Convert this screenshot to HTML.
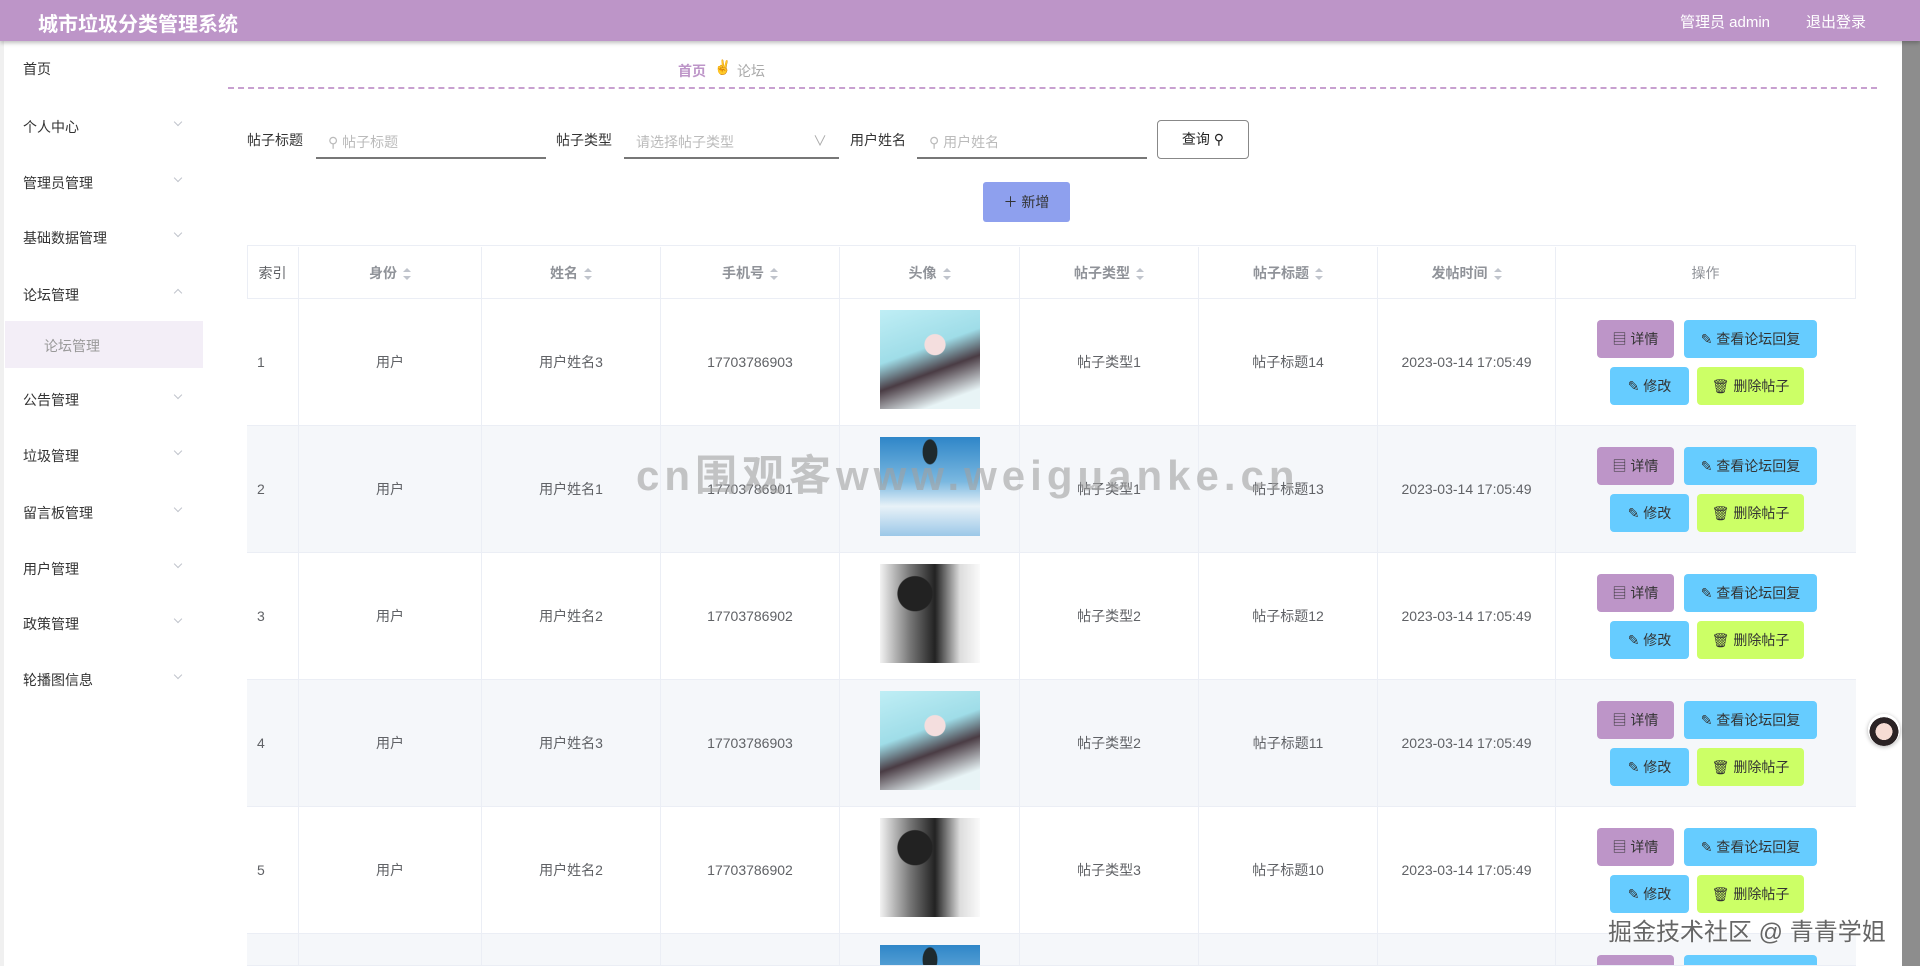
<!DOCTYPE html>
<html><head><meta charset="utf-8"><style>
*{box-sizing:border-box;margin:0;padding:0}
html,body{width:1920px;height:966px;overflow:hidden}
body{background:#fff;font-family:"Liberation Sans","Noto Sans CJK SC",sans-serif;color:#333;position:relative}
#wrap{position:absolute;left:0;top:0;width:1920px;height:966px;overflow:hidden}
.a{position:absolute}
.hdr{left:0;top:0;width:1920px;height:41px;background:#bd95c8;box-shadow:0 2px 4px rgba(0,0,0,.25);z-index:3}
.sb{left:1902px;top:41px;width:18px;height:925px;background:#8d8d8d}
.nav{left:23px;font-size:14px;color:#333}
.chev{left:175px;width:6px;height:6px;border-right:1px solid #c0c4cc;border-bottom:1px solid #c0c4cc;transform:rotate(45deg)}
.chev.up{transform:rotate(225deg)}
.lbl{font-size:14px;color:#333;top:130px}
.inp{border-bottom:2px solid #777;height:30px;top:129px;font-size:14px;color:#bbb;padding:3px 0 0 12px}
.th{top:247px;height:52px;border-right:1px solid #ebeef5;font-size:14px;color:#909399;font-weight:bold;text-align:center;line-height:52px}
.sort{display:inline-block;vertical-align:middle;margin-left:6px;width:8px;height:12px;position:relative}
.sort:before{content:"";position:absolute;left:0;top:0;border:4px solid transparent;border-bottom-color:#c0c4cc;border-top:0}
.sort:after{content:"";position:absolute;left:0;bottom:0;border:4px solid transparent;border-top-color:#c0c4cc;border-bottom:0}
.row{left:0;width:1609px;height:127px;border-bottom:1px solid #ebeef5}
.cell{position:absolute;top:0;height:127px;line-height:127px;font-size:14px;color:#606266;text-align:center;border-right:1px solid #ebeef5}
.btn{position:absolute;height:38px;border-radius:4px;font-size:14px;color:#333;line-height:38px;text-align:center}
.pic{position:absolute;left:633px;top:11px;width:100px;height:99px}
</style></head><body><div id="wrap">
<div class="a hdr"><div class="a" style="left:38px;top:8px;font-size:20px;font-weight:bold;color:#fff">城市垃圾分类管理系统</div>
<div class="a" style="left:1680px;top:11px;font-size:15px;color:#fff">管理员 admin</div>
<div class="a" style="left:1806px;top:11px;font-size:15px;color:#fff">退出登录</div></div>
<div class="a sb"></div>
<div class="a" style="left:0;top:41px;width:4px;height:925px;background:#f0f0f0"></div>
<div class="a" style="left:5px;top:321px;width:198px;height:47px;background:#f3eef7"></div>
<div class="a nav" style="top:59px">首页</div>
<div class="a nav" style="top:117px">个人中心</div><div class="a chev" style="top:119px"></div>
<div class="a nav" style="top:173px">管理员管理</div><div class="a chev" style="top:175px"></div>
<div class="a nav" style="top:228px">基础数据管理</div><div class="a chev" style="top:230px"></div>
<div class="a nav" style="top:285px">论坛管理</div><div class="a chev up" style="top:290px"></div>
<div class="a nav" style="top:336px;left:44px;color:#999">论坛管理</div>
<div class="a nav" style="top:390px">公告管理</div><div class="a chev" style="top:392px"></div>
<div class="a nav" style="top:446px">垃圾管理</div><div class="a chev" style="top:448px"></div>
<div class="a nav" style="top:503px">留言板管理</div><div class="a chev" style="top:505px"></div>
<div class="a nav" style="top:559px">用户管理</div><div class="a chev" style="top:561px"></div>
<div class="a nav" style="top:614px">政策管理</div><div class="a chev" style="top:616px"></div>
<div class="a nav" style="top:670px">轮播图信息</div><div class="a chev" style="top:672px"></div>

<div class="a" style="left:678px;top:61px;font-size:14px;color:#bd95c8;font-weight:bold">首页</div>
<div class="a" style="left:714px;top:59px;font-size:14px">✌</div>
<div class="a" style="left:737px;top:61px;font-size:14px;color:#aaa">论坛</div>
<div class="a" style="left:228px;top:87px;width:1649px;border-top:2px dashed #c8a0d0"></div>

<div class="a lbl" style="left:247px">帖子标题</div>
<div class="a inp" style="left:316px;width:230px">⚲ 帖子标题</div>
<div class="a lbl" style="left:556px">帖子类型</div>
<div class="a inp" style="left:624px;width:215px">请选择帖子类型<span style="position:absolute;right:12px;top:2px;color:#aaa">∨</span></div>
<div class="a lbl" style="left:850px">用户姓名</div>
<div class="a inp" style="left:917px;width:230px">⚲ 用户姓名</div>
<div class="a" style="left:1157px;top:120px;width:92px;height:39px;border:1px solid #888;border-radius:4px;font-size:14px;line-height:37px;text-align:center;color:#222">查询 ⚲</div>
<div class="a" style="left:983px;top:182px;width:87px;height:40px;background:#8ea0ee;border-radius:3px;font-size:14px;line-height:40px;text-align:center;color:#333">＋ 新增</div>

<div class="a" style="left:247px;top:245px;width:1609px;height:721px;border:1px solid #ebeef5;border-bottom:0"></div>
<div class="a" style="left:247px;top:298px;width:1609px;border-top:1px solid #ebeef5"></div>
<div class="a th" style="left:247px;width:52px;font-weight:normal;color:#606266">索引</div>
<div class="a th" style="left:299px;width:183px">身份<span class="sort"></span></div>
<div class="a th" style="left:482px;width:179px">姓名<span class="sort"></span></div>
<div class="a th" style="left:661px;width:179px">手机号<span class="sort"></span></div>
<div class="a th" style="left:840px;width:180px">头像<span class="sort"></span></div>
<div class="a th" style="left:1020px;width:179px">帖子类型<span class="sort"></span></div>
<div class="a th" style="left:1199px;width:179px">帖子标题<span class="sort"></span></div>
<div class="a th" style="left:1378px;width:178px">发帖时间<span class="sort"></span></div>
<div class="a th" style="left:1556px;width:300px;font-weight:normal">操作</div>

<div id="rows" class="a" style="left:247px;top:299px;width:1609px;height:667px;overflow:hidden"></div>
<script>
var data=[["1","用户姓名3","17703786903","g","帖子类型1","帖子标题14"],["2","用户姓名1","17703786901","b","帖子类型1","帖子标题13"],["3","用户姓名2","17703786902","m","帖子类型2","帖子标题12"],["4","用户姓名3","17703786903","g","帖子类型2","帖子标题11"],["5","用户姓名2","17703786902","m","帖子类型3","帖子标题10"],["6","","","b","",""]];
var pics={g:"radial-gradient(circle at 55% 35%,#f4dede 0 12%,transparent 13%),linear-gradient(160deg,#bfeef5 0%,#9fdde8 40%,#4a3c44 60%,#e8f4f6 85%)",b:"radial-gradient(ellipse at 50% 15%,#1e2a2e 0 10%,transparent 11%),linear-gradient(180deg,#2f86c8 0%,#7ab8e0 45%,#e8f2f8 70%,#9cc8e8 100%)",m:"radial-gradient(circle at 35% 30%,#222 0 18%,transparent 19%),linear-gradient(90deg,#f2f2f2 0%,#777 30%,#222 55%,#ddd 80%,#fafafa 100%)"};
var cols=[[0,52],[52,183],[235,179],[414,179],[593,180],[773,179],[952,179],[1131,178],[1309,300]];
var h="";
data.forEach(function(d,i){
 var top=i*127;
 h+='<div class="a row" style="top:'+top+'px;'+(i==5?'height:32px;overflow:hidden;':'')+'background:'+(i%2?'#f5f7fa':'#fff')+'">';
 var v=[d[0],d[1]?"用户":"",d[1],d[2],"",d[4],d[5],d[1]?"2023-03-14 17:05:49":"",""];
 cols.forEach(function(c,j){h+='<div class="cell" style="left:'+c[0]+'px;width:'+c[1]+'px;'+(j==0?'text-align:left;padding-left:10px;':'')+(j==8?'border-right:0;':'')+'">'+v[j]+'</div>';});
 h+='<div class="pic" style="background:'+pics[d[3]]+'"></div>';
 h+='<div class="btn" style="left:1350px;top:21px;width:77px;background:#bd95c8">▤ 详情</div>';
 h+='<div class="btn" style="left:1437px;top:21px;width:133px;background:#66ccff">✎ 查看论坛回复</div>';
 h+='<div class="btn" style="left:1363px;top:68px;width:79px;background:#66ccff">✎ 修改</div>';
 h+='<div class="btn" style="left:1450px;top:68px;width:107px;background:#ccff66">🗑 删除帖子</div>';
 h+='</div>';
});
document.getElementById("rows").innerHTML=h;
</script>
<div class="a" style="left:636px;top:442px;font-size:42px;font-weight:bold;color:rgba(160,160,160,.6);letter-spacing:5px;z-index:5">cn围观客www.weiguanke.cn</div>
<div class="a" style="left:1608px;top:912px;font-size:24px;color:#666;text-shadow:0 0 2px #fff,0 0 2px #fff;z-index:5">掘金技术社区 @ 青青学姐</div>
<div class="a" style="left:1868px;top:714px;width:32px;height:32px;border-radius:50%;background:radial-gradient(circle at 50% 55%,#f6dcd4 0 35%,#2a2224 36% 60%,#fff 61%);box-shadow:0 1px 4px rgba(0,0,0,.3);z-index:5"></div>
</div></body></html>
